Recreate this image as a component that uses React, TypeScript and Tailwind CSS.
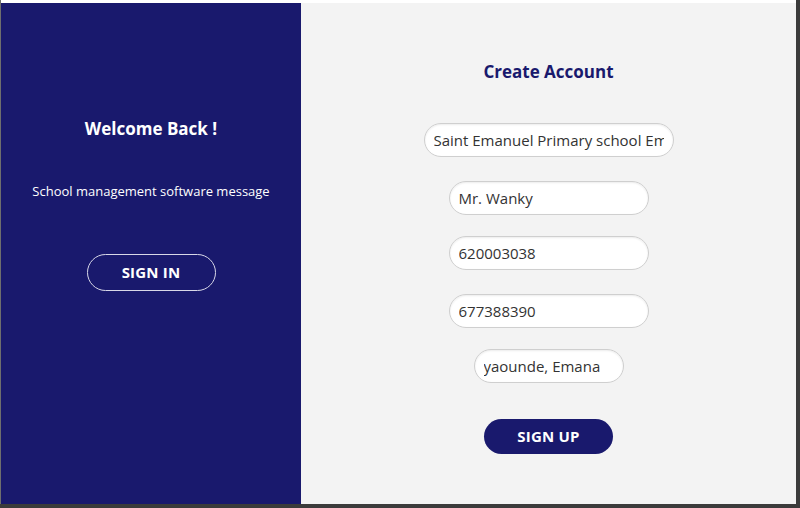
const font = { fontFamily: '"Open Sans", "Noto Sans", sans-serif' };

function Field({ value, width }: { value: string; width: string }) {
    return (
        <input
            defaultValue={value}
            className={`${width} h-[34px] rounded-full border border-[#cfcfcf] bg-white px-[9px] text-[15px] text-[#333] shadow-[inset_0_1px_2px_rgba(0,0,0,0.08)] outline-none`}
            style={font}
        />
    );
}

export default function App() {
    return (
        <div className="w-[800px] h-[508px] flex flex-col bg-[#3b3b3b] overflow-hidden" style={font}>
            <div className="flex h-[3px]">
                <div className="w-[1px] bg-[#6e6e6e]" />
                <div className="w-[795px] bg-white" />
            </div>
            <div className="flex h-[501px]">
                <div className="w-[1px] bg-[#6e6e6e]" />
                {/* left panel */}
                <div className="w-[300px] bg-[#19196d] flex flex-col items-center pt-[114px] text-white">
                    <h2 className="text-[17px] font-bold leading-[23px]">Welcome Back !</h2>
                    <p className="mt-[42px] text-[13px] leading-[18px]">School management software message</p>
                    <button className="mt-[54px] w-[129px] h-[37px] rounded-full border border-[#d8d8e8] text-[15px] font-bold tracking-[0.2px]">
                        SIGN IN
                    </button>
                </div>
                {/* right panel */}
                <div className="w-[495px] bg-[#f3f3f3] flex flex-col items-center pt-[57px]">
                    <h2 className="text-[17px] font-bold leading-[23px] text-[#19196d]">Create Account</h2>
                    <div className="mt-[40px]">
                        <Field value="Saint Emanuel Primary school Emana" width="w-[250px]" />
                    </div>
                    <div className="mt-[24px]">
                        <Field value="Mr. Wanky" width="w-[200px]" />
                    </div>
                    <div className="mt-[21px]">
                        <Field value="620003038" width="w-[200px]" />
                    </div>
                    <div className="mt-[24px]">
                        <Field value="677388390" width="w-[200px]" />
                    </div>
                    <div className="mt-[21px]">
                        <Field value="yaounde, Emana" width="w-[150px]" />
                    </div>
                    <button className="mt-[36px] w-[129px] h-[35px] rounded-full bg-[#19196d] text-white text-[15px] font-bold tracking-[0.2px]">
                        SIGN UP
                    </button>
                </div>
                <div className="w-[4px] bg-[#3b3b3b]" />
            </div>
        </div>
    );
}
